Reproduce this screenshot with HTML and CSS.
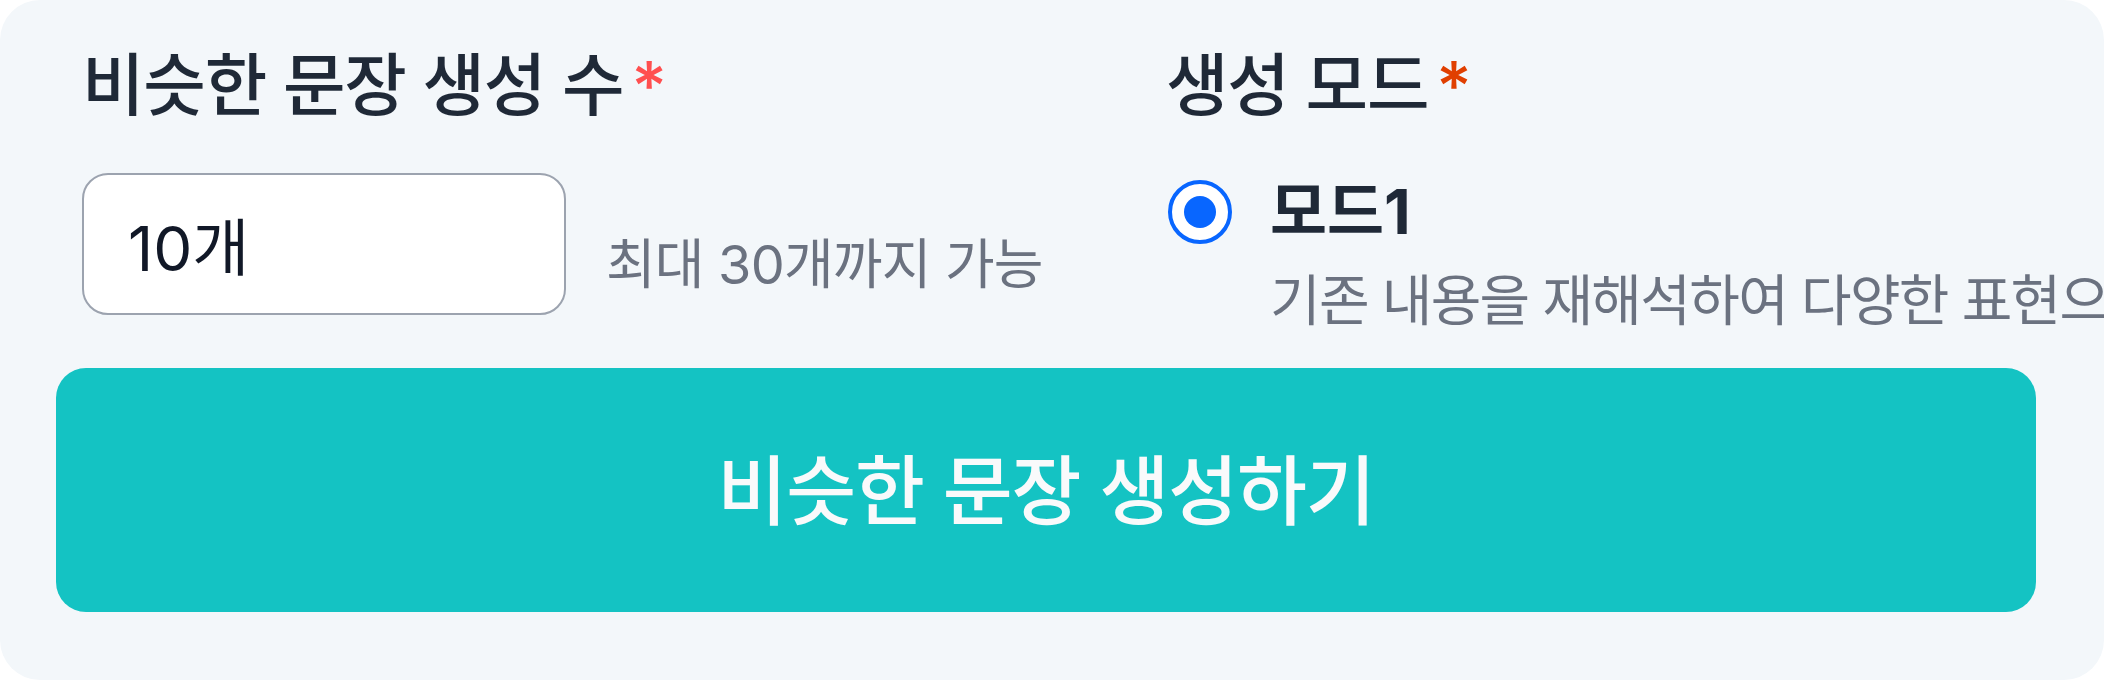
FILE: index.html
```html
<!DOCTYPE html>
<html lang="ko">
<head>
<meta charset="utf-8">
<title>비슷한 문장 생성</title>
<link rel="stylesheet" href="styles.css">
</head>
<body>
<div class="panel">
  <div class="fields">
    <div class="field field-count">
      <div class="label">비슷한 문장 생성 수<span class="req req-count">*</span></div>
      <div class="count-row">
        <div class="input">10개</div>
        <div class="helper">최대 30개까지 가능</div>
      </div>
    </div>
    <div class="field field-mode">
      <div class="label">생성 모드<span class="req req-mode">*</span></div>
      <div class="option">
        <span class="radio"><span class="dot"></span></span>
        <div class="option-text">
          <div class="option-title">모드1</div>
          <div class="option-desc">기존 내용을 재해석하여 다양한 표현으로 바꿔 줍니다</div>
        </div>
      </div>
    </div>
  </div>
  <button class="submit" type="button">비슷한 문장 생성하기</button>
</div>
</body>
</html>
```

FILE: styles.css
```css
html, body {
  margin: 0;
  padding: 0;
  overflow: hidden;
  background: #ffffff;
}
body {
  font-family: Inter, "Noto Sans CJK KR", sans-serif;
  width: 2104px;
  height: 680px;
}
.panel {
  box-sizing: border-box;
  width: 2104px;
  height: 680px;
  background: #f3f7fa;
  border-radius: 40px;
  padding: 45px 68px 0 56px;
  display: flex;
  flex-direction: column;
}
.fields {
  display: flex;
  padding-left: 26px;
  height: 323px;
}
.field-count {
  width: 1084px;
  flex: none;
}
.field-mode {
  flex: none;
  white-space: nowrap;
}
.label {
  font-size: 68px;
  line-height: 80px;
  font-weight: 500;
  color: #1f2937;
  letter-spacing: -0.018em;
  white-space: nowrap;
}
.req {
  letter-spacing: 0;
  margin-left: 8px;
}
.req-count { color: #ff4f4f; }
.req-mode { color: #e03f00; }
.count-row {
  display: flex;
  align-items: flex-end;
  margin-top: 48px;
}
.input {
  box-sizing: border-box;
  width: 484px;
  height: 142px;
  border: 2.5px solid #9ca3af;
  border-radius: 26px;
  background: #ffffff;
  display: flex;
  align-items: center;
  padding-left: 44px;
  font-size: 62px;
  color: #111827;
  letter-spacing: 0;
}
.helper {
  margin-left: 40px;
  margin-bottom: 18px;
  font-size: 54px;
  line-height: 64px;
  color: #6b7280;
  letter-spacing: -0.015em;
  white-space: nowrap;
}
.option {
  display: flex;
  align-items: flex-start;
  margin-top: 55px;
}
.radio {
  box-sizing: border-box;
  flex: none;
  width: 64px;
  height: 64px;
  border: 4px solid #0866ff;
  border-radius: 50%;
  background: #ffffff;
  display: flex;
  align-items: center;
  justify-content: center;
  margin-left: 2px;
}
.dot {
  width: 32px;
  height: 32px;
  border-radius: 50%;
  background: #0866ff;
}
.option-text {
  margin-left: 38px;
}
.option-title {
  font-size: 62px;
  line-height: 64px;
  font-weight: 700;
  color: #1f2937;
  letter-spacing: 0;
}
.option-desc {
  margin-top: 24px;
  font-size: 55px;
  line-height: 64px;
  color: #6b7280;
  letter-spacing: -0.03em;
}
.submit {
  box-sizing: border-box;
  width: 1980px;
  height: 244px;
  border: none;
  border-radius: 30px;
  background: #14c3c3;
  color: #f9fafb;
  font-family: Inter, "Noto Sans CJK KR", sans-serif;
  font-size: 76px;
  font-weight: 500;
  letter-spacing: -0.015em;
  padding: 0 0 8px 0;
  cursor: pointer;
}
```
